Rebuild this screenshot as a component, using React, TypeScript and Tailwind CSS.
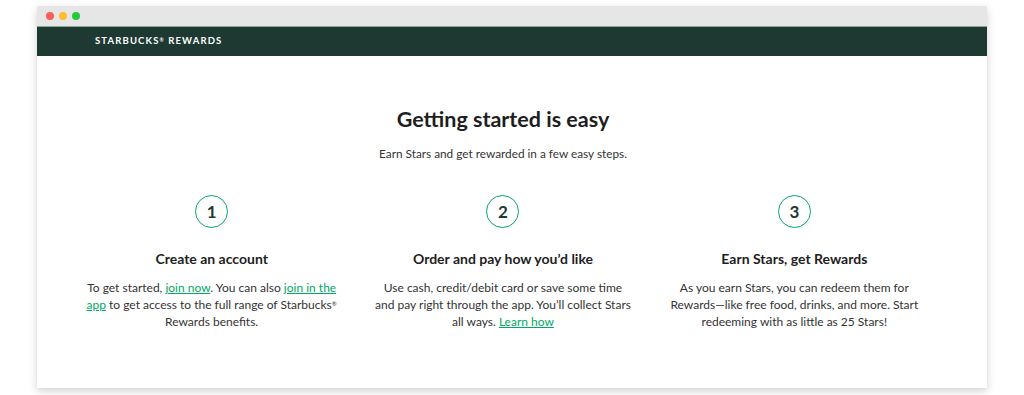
import React from 'react'

const steps = [
  {
    n: '1',
    title: 'Create an account',
    body: (
      <>
        To get started, <a className="text-[#00a862] underline">join now</a>. You can also{' '}
        <a className="text-[#00a862] underline">join in the app</a> to get access to the full range of Starbucks
        <sup className="text-[6px]">®</sup> Rewards benefits.
      </>
    ),
  },
  {
    n: '2',
    title: 'Order and pay how you\u2019d like',
    body: (
      <>
        Use cash, credit/debit card or save some time and pay right through the app. You{'\u2019'}ll collect Stars all
        ways. <a className="text-[#00a862] underline">Learn how</a>
      </>
    ),
  },
  {
    n: '3',
    title: 'Earn Stars, get Rewards',
    body: <>As you earn Stars, you can redeem them for Rewards{'\u2014'}like free food, drinks, and more. Start redeeming with as little as 25 Stars!</>,
  },
]

export default function App() {
  return (
    <div className="w-[1024px] h-[395px] bg-white pt-[6px] font-['Lato',sans-serif] overflow-hidden">
      <div className="ml-[37px] w-[950px] h-[382px] bg-white shadow-[0_3px_8px_rgba(0,0,0,0.18)] flex flex-col">
        {/* window bar */}
        <div className="h-[20px] bg-[#e6e6e6] flex items-center gap-[5px] pl-[9px]">
          <span className="w-[8px] h-[8px] rounded-full bg-[#fe5f57]" />
          <span className="w-[8px] h-[8px] rounded-full bg-[#febc2e]" />
          <span className="w-[8px] h-[8px] rounded-full bg-[#28c840]" />
        </div>
        <div className="h-[30px] bg-[#1e3932] border-t border-[#8aa69a] flex items-center pl-[58px]">
          <span className="text-white text-[9.5px] font-bold tracking-[0.12em]">
            STARBUCKS<sup className="text-[5px]">®</sup> REWARDS
          </span>
        </div>
        <div className="flex-1 flex flex-col items-center pr-[18px] text-[#1e1e1e]">
          <h1 className="mt-[49px] text-[21.5px] font-bold leading-[28px]">Getting started is easy</h1>
          <p className="mt-[13px] text-[11.8px] leading-[16px] text-[#333]">
            Earn Stars and get rewarded in a few easy steps.
          </p>
          <div className="mt-[33px] w-[874px] grid grid-cols-3">
            {steps.map((s) => (
              <div key={s.n} className="flex flex-col items-center">
                <div className="w-[33px] h-[33px] rounded-full border-[1.5px] border-[#00a862] flex items-center justify-center text-[17px] font-bold text-[#1e3932]">
                  {s.n}
                </div>
                <h2 className="mt-[22px] text-[14px] font-bold leading-[18px]">{s.title}</h2>
                <p className="mt-[11px] w-[256px] text-center text-[12px] leading-[17px] text-[#333]">{s.body}</p>
              </div>
            ))}
          </div>
        </div>
      </div>
    </div>
  )
}
